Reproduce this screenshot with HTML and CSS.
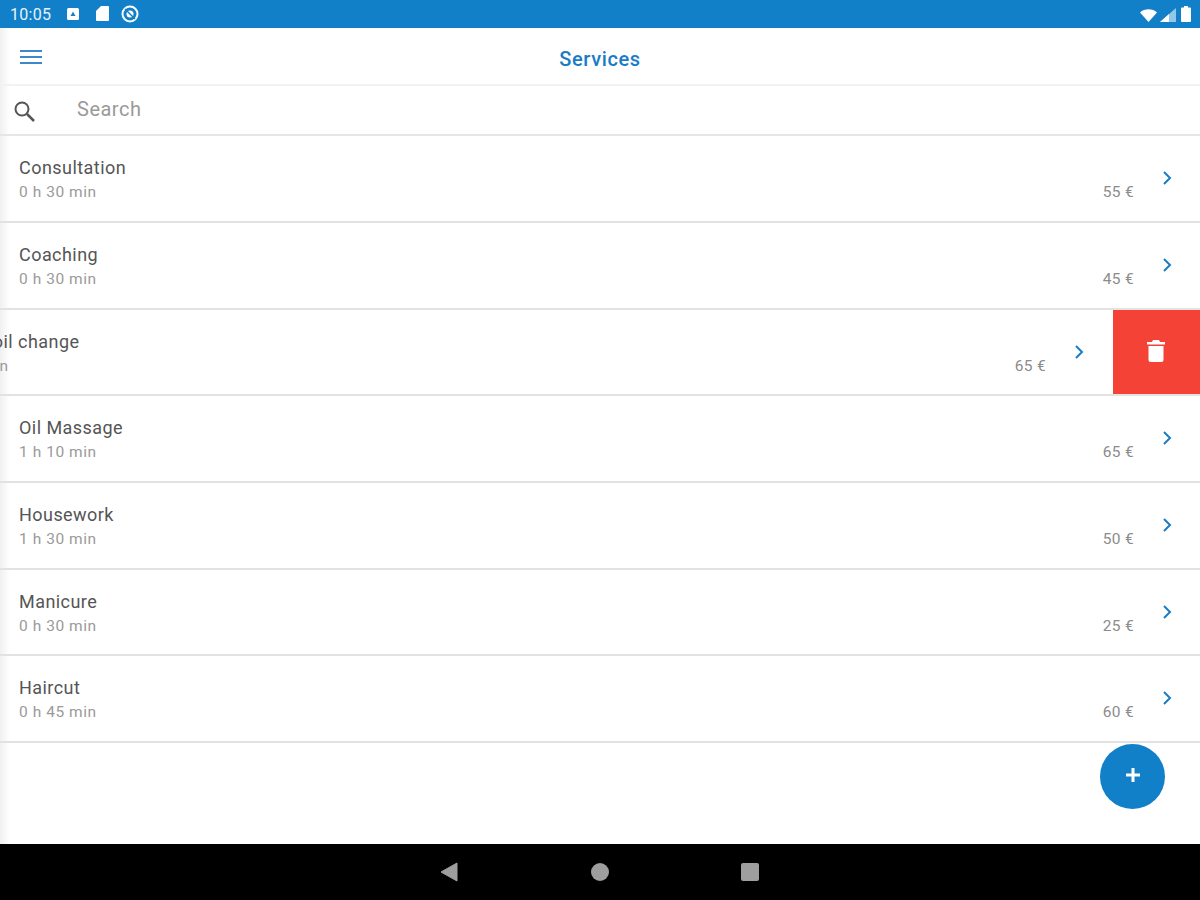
FILE: index.html
```html
<!DOCTYPE html>
<html lang="en">
<head>
<meta charset="UTF-8" />
<meta name="viewport" content="width=device-width, initial-scale=1" />
<title>Services</title>
<link rel="stylesheet" href="styles.css">
</head>
<body>

<div class="screen">
  <!-- drawer edge shadow -->
  <div class="edge"></div>

  <!-- Status bar -->
  <div class="statusbar">
    <span class="clock">10:05</span>
    <svg class="st-icon first" width="14" height="14" viewBox="0 0 14 14"><rect x="1" y="1" width="12" height="12" rx="1.5" fill="#fff"/><path d="M7 4.500 9.500 9h-5z" fill="#1180c9"/></svg>
    <svg class="st-icon sd" width="15" height="17" viewBox="0 0 15 17"><path d="M6 1h7a1 1 0 0 1 1 1v13a1 1 0 0 1-1 1H2a1 1 0 0 1-1-1V6z" fill="#fff"/></svg>
    <svg class="st-icon nosync" width="18" height="18" viewBox="0 0 18 18"><circle cx="9" cy="9" r="7.500" fill="none" stroke="#fff" stroke-width="2"/><circle cx="9" cy="9" r="3.500" fill="#fff"/><path d="M4 4l10 10" stroke="#1180c9" stroke-width="1.400"/></svg>
    <div class="status-right">
      <svg class="wifi" width="17" height="13" viewBox="0 0 17 13"><path d="M0 3.500C4.500-.8 12.500-.8 17 3.500L8.500 13z" fill="#fff"/></svg>
      <svg class="signal" width="16" height="14" viewBox="0 0 16 14"><path d="M16 0v14H0z" fill="#fff" fill-opacity=".55"/><path d="M9 6v8H0z" fill="#fff"/></svg>
      <svg width="10" height="16" viewBox="0 0 10 16"><path d="M3 0h4v1.500h2a1 1 0 0 1 1 1V15a1 1 0 0 1-1 1H1a1 1 0 0 1-1-1V2.500a1 1 0 0 1 1-1h2z" fill="#fff"/></svg>
    </div>
  </div>

  <!-- Top bar -->
  <div class="topbar">
    <svg class="menu" width="22" height="16" viewBox="0 0 22 16"><path d="M0 2h22M0 8h22M0 14h22" stroke="#3d87cc" stroke-width="2"/></svg>
    <div class="title">Services</div>
  </div>

  <div class="searchbar">
    <svg class="search-icon" width="24" height="24" viewBox="0 0 24 24"><circle cx="10" cy="10" r="6.500" fill="none" stroke="#555" stroke-width="2"/><path d="M15 15l7 7" stroke="#555" stroke-width="2.500"/></svg>
    <span class="search-text">Search</span>
  </div>

  <!-- Services list -->
  <div class="list">
    <div class="row">
      <div class="row-text"><div class="name">Consultation</div><div class="time">0 h 30 min</div></div>
      <div class="price">55 €</div>
      <svg class="chev" width="10" height="16" viewBox="0 0 10 16"><path d="M2 2l6 6-6 6" fill="none" stroke="#1a7cc6" stroke-width="2"/></svg>
    </div>
    <div class="row">
      <div class="row-text"><div class="name">Coaching</div><div class="time">0 h 30 min</div></div>
      <div class="price">45 €</div>
      <svg class="chev" width="10" height="16" viewBox="0 0 10 16"><path d="M2 2l6 6-6 6" fill="none" stroke="#1a7cc6" stroke-width="2"/></svg>
    </div>
    <div class="row swiped">
      <div class="row-slide">
        <div class="row-text"><div class="name">Engine oil change</div><div class="time">0 h 30 min</div></div>
        <div class="price">65 €</div>
        <svg class="chev" width="10" height="16" viewBox="0 0 10 16"><path d="M2 2l6 6-6 6" fill="none" stroke="#1a7cc6" stroke-width="2"/></svg>
      </div>
      <div class="delete">
        <svg width="20" height="24" viewBox="0 0 20 24"><path d="M7 1h6l1 2h5v2.500H1V3h5zM2.500 7h15v14a2 2 0 0 1-2 2h-11a2 2 0 0 1-2-2z" fill="#fff"/></svg>
      </div>
    </div>
    <div class="row">
      <div class="row-text"><div class="name">Oil Massage</div><div class="time">1 h 10 min</div></div>
      <div class="price">65 €</div>
      <svg class="chev" width="10" height="16" viewBox="0 0 10 16"><path d="M2 2l6 6-6 6" fill="none" stroke="#1a7cc6" stroke-width="2"/></svg>
    </div>
    <div class="row">
      <div class="row-text"><div class="name">Housework</div><div class="time">1 h 30 min</div></div>
      <div class="price">50 €</div>
      <svg class="chev" width="10" height="16" viewBox="0 0 10 16"><path d="M2 2l6 6-6 6" fill="none" stroke="#1a7cc6" stroke-width="2"/></svg>
    </div>
    <div class="row">
      <div class="row-text"><div class="name">Manicure</div><div class="time">0 h 30 min</div></div>
      <div class="price">25 €</div>
      <svg class="chev" width="10" height="16" viewBox="0 0 10 16"><path d="M2 2l6 6-6 6" fill="none" stroke="#1a7cc6" stroke-width="2"/></svg>
    </div>
    <div class="row">
      <div class="row-text"><div class="name">Haircut</div><div class="time">0 h 45 min</div></div>
      <div class="price">60 €</div>
      <svg class="chev" width="10" height="16" viewBox="0 0 10 16"><path d="M2 2l6 6-6 6" fill="none" stroke="#1a7cc6" stroke-width="2"/></svg>
    </div>
  </div>

  <div class="spacer"></div>

  <div class="fab">
    <svg width="16" height="16" viewBox="0 0 16 16"><path d="M8 1v14M1 8h14" stroke="#fff" stroke-width="3"/></svg>
  </div>

  <!-- Nav bar -->
  <div class="navbar">
    <svg width="18" height="20" viewBox="0 0 18 20"><path d="M1 10 17 1v18z" fill="#9e9e9e" stroke="#9e9e9e" stroke-linejoin="round"/></svg>
    <svg class="home" width="20" height="20" viewBox="0 0 20 20"><circle cx="10" cy="10" r="9" fill="#9e9e9e"/></svg>
    <svg width="20" height="20" viewBox="0 0 20 20"><rect x="1" y="1" width="18" height="18" rx="2" fill="#9e9e9e"/></svg>
  </div>
</div>

</body>
</html>
```

FILE: styles.css
```css
* {
  box-sizing: border-box;
}
html, body {
  margin: 0;
  height: 100%;
}
body {
  background: #fff;
  font-family: Roboto, "Liberation Sans", sans-serif;
  overflow: hidden;
}
.screen {
  width: 1200px;
  height: 900px;
  display: flex;
  flex-direction: column;
  position: relative;
  overflow: hidden;
}
.statusbar {
  height: 28px;
  flex: none;
  background: #1180c9;
  color: #e8f2fa;
  display: flex;
  align-items: center;
  padding: 0 9px 0 10px;
  font-size: 16px;
  letter-spacing: 0.3px;
}
.clock {
  width: 43px;
}
.st-icon {
  margin-left: 15px;
}
.st-icon.first {
  margin-left: 13px;
}
.st-icon.sd {
  margin-left: 15px;
  margin-top: -2px;
}
.st-icon.nosync {
  margin-left: 11px;
  margin-top: -1px;
}
.status-right {
  margin-left: auto;
  display: flex;
  align-items: center;
  gap: 3px;
}
.wifi,
.signal {
  margin-top: 2px;
}
.signal {
  margin-right: 2px;
}
.topbar {
  height: 58px;
  flex: none;
  display: flex;
  align-items: center;
  justify-content: center;
  padding-top: 5px;
  border-bottom: 2px solid #f2f2f2;
  position: relative;
}
.menu {
  position: absolute;
  left: 20px;
  top: 21px;
}
.title {
  color: #1a7cc6;
  font-size: 20px;
  font-weight: 500;
  letter-spacing: 0.6px;
}
.searchbar {
  height: 50px;
  flex: none;
  display: flex;
  align-items: center;
  padding-left: 12px;
  border-bottom: 2px solid #e6e6e6;
  position: relative;
}
.search-icon {
  margin-top: 2px;
}
.search-text {
  margin-left: 41px;
  margin-bottom: 2px;
  font-size: 20px;
  letter-spacing: 0.5px;
  color: #9a9a9a;
}
.list {
  padding-top: 0.3px;
}
.row {
  height: 86.7px;
  display: flex;
  align-items: flex-start;
  padding: 0 28px 0 19px;
  border-bottom: 2px solid #e2e2e2;
  position: relative;
}
.row-text {
  flex: 1;
  padding-top: 20px;
}
.name {
  font-size: 18px;
  line-height: 24px;
  letter-spacing: 0.45px;
  color: #555;
}
.time {
  font-size: 15.500px;
  line-height: 22px;
  margin-top: 1px;
  letter-spacing: 0.55px;
  color: #9a9a9a;
}
.price {
  font-size: 15.500px;
  letter-spacing: 0.3px;
  color: #8c8c8c;
  margin-top: 47px;
  margin-right: 28px;
}
.chev {
  margin-top: 34px;
}
.row-slide {
  position: absolute;
  left: -88px;
  top: 0;
  width: 1200px;
  height: 85px;
  display: flex;
  align-items: flex-start;
  padding: 0 28px 0 19px;
}
.delete {
  position: absolute;
  right: 0;
  top: 0;
  width: 87px;
  height: 84.7px;
  padding-right: 2px;
  padding-bottom: 2px;
  background: #f44336;
  display: flex;
  align-items: center;
  justify-content: center;
}
.spacer {
  flex: 1;
}
.fab {
  position: absolute;
  left: 1100px;
  top: 744px;
  width: 65px;
  height: 65px;
  padding-bottom: 3px;
  border-radius: 50%;
  background: #1180c9;
  display: flex;
  align-items: center;
  justify-content: center;
}
.edge {
  position: absolute;
  left: 0;
  top: 28px;
  bottom: 56px;
  width: 10px;
  background: linear-gradient(to right, #f0f0f0, rgba(255, 255, 255, 0));
  pointer-events: none;
}
.navbar {
  height: 56px;
  flex: none;
  background: #000;
  display: flex;
  align-items: center;
  justify-content: center;
  gap: 131px;
}
.home {
  margin-left: 1px;
  margin-right: -1px;
}
```
